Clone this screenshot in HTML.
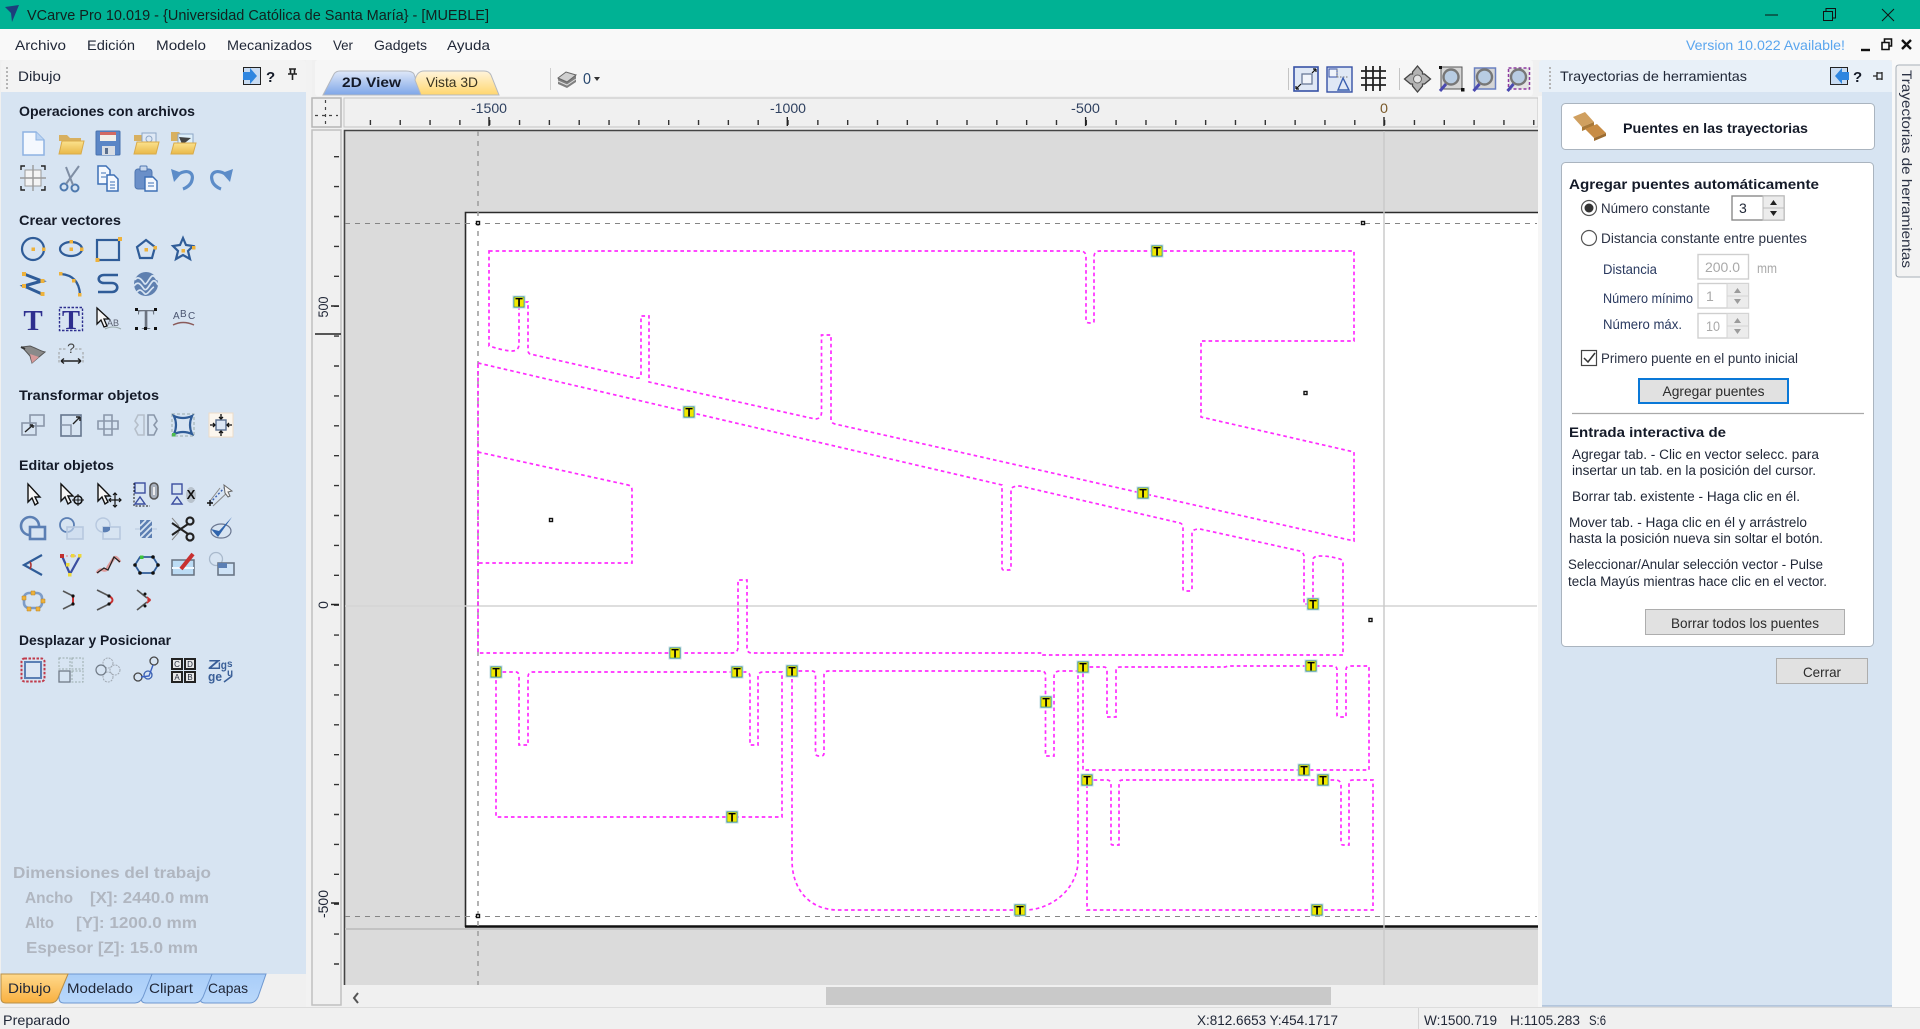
<!DOCTYPE html>
<html lang="es"><head><meta charset="utf-8"><title>VCarve Pro</title>
<style>
html,body{margin:0;padding:0;background:#f0f0f0;width:1920px;height:1029px;overflow:hidden}
svg{display:block;filter:blur(.35px)}
text{font-family:"Liberation Sans",sans-serif;font-size:14px;fill:#1f2636}
.b{font-weight:bold;fill:#141a28}
.g{font-weight:bold;font-size:16px;fill:#b0b6c0}
.d{fill:#a9a9a9}
.i{fill:none;stroke:#2f5c98;stroke-width:2.2}
.l{fill:none;stroke:#8a97aa;stroke-width:1.6}
.k{fill:none;stroke:#222;stroke-width:1.4}
.y{fill:#eeb23c}
.m{fill:none;stroke:#ff2cff;stroke-width:1.7;stroke-dasharray:3.6 3}
.gd{fill:none;stroke:#858585;stroke-width:1;stroke-dasharray:5 5}
.tm{font-weight:bold;font-size:12px;fill:#000}
</style></head><body>
<svg width="1920" height="1029" viewBox="0 0 1920 1029" xmlns="http://www.w3.org/2000/svg">
<defs>
<linearGradient id="bt" x1="0" y1="0" x2="0" y2="1"><stop offset="0" stop-color="#dfe8f8"/><stop offset="1" stop-color="#7ea6e8"/></linearGradient>
<linearGradient id="yt" x1="0" y1="0" x2="0" y2="1"><stop offset="0" stop-color="#fff4dc"/><stop offset="1" stop-color="#ffd66e"/></linearGradient>
<linearGradient id="ot" x1="0" y1="0" x2="0" y2="1"><stop offset="0" stop-color="#ffd98c"/><stop offset="1" stop-color="#f8b040"/></linearGradient>
<linearGradient id="lt" x1="0" y1="0" x2="0" y2="1"><stop offset="0" stop-color="#a9cdf8"/><stop offset="1" stop-color="#b9d8fb"/></linearGradient>
<linearGradient id="fo" x1="0" y1="0" x2="0" y2="1"><stop offset="0" stop-color="#fbe28e"/><stop offset="1" stop-color="#e9b848"/></linearGradient>
</defs>

<!-- chrome backgrounds -->
<rect width="1920" height="1029" fill="#f0f0f0"/>
<rect width="1920" height="29" fill="#00b294"/>
<rect y="29" width="1920" height="31" fill="#f9f9f9"/>
<rect x="315" y="60" width="1218" height="36" rx="3" fill="#f6f6f6"/>
<rect x="1892" y="60" width="28" height="947" fill="#f9f9f9"/>
<rect x="306" y="60" width="6" height="947" fill="#f2f2f2"/>

<!-- title bar -->
<path d="M5,7 L19,5 L12,22 L11,13 Z" fill="#1c3f7c"/>
<text x="27" y="20" style="font-size:15px;fill:#12201e" textLength="462" lengthAdjust="spacingAndGlyphs">VCarve Pro 10.019 - {Universidad Católica de Santa María} - [MUEBLE]</text>
<path d="M1765,15 H1778" stroke="#111" stroke-width="1"/>
<path d="M1823.5,11.5 H1832.5 V20.5 H1823.5 Z M1826,11 V8.5 H1835.5 V18 H1833" fill="none" stroke="#111" stroke-width="1"/>
<path d="M1882,9 L1894,21 M1894,9 L1882,21" stroke="#111" stroke-width="1"/>

<!-- menu -->
<text x="15" y="50" textLength="51" lengthAdjust="spacingAndGlyphs">Archivo</text>
<text x="87" y="50" textLength="48" lengthAdjust="spacingAndGlyphs">Edición</text>
<text x="156" y="50" textLength="50" lengthAdjust="spacingAndGlyphs">Modelo</text>
<text x="227" y="50" textLength="85" lengthAdjust="spacingAndGlyphs">Mecanizados</text>
<text x="333" y="50" textLength="20" lengthAdjust="spacingAndGlyphs">Ver</text>
<text x="374" y="50" textLength="53" lengthAdjust="spacingAndGlyphs">Gadgets</text>
<text x="447" y="50" textLength="43" lengthAdjust="spacingAndGlyphs">Ayuda</text>
<text x="1686" y="50" textLength="159" lengthAdjust="spacingAndGlyphs" style="fill:#5ba6ee">Version 10.022 Available!</text>
<path d="M1861,50 H1870" stroke="#111" stroke-width="2.4"/>
<path d="M1882,49.5 V42.5 H1889 V49.5 Z M1884.5,42 V39 H1891.5 V46 H1889.5" fill="none" stroke="#111" stroke-width="1.6"/>
<path d="M1902,40 L1911,49 M1911,40 L1902,49" stroke="#111" stroke-width="2.4"/>

<!-- left panel -->
<path d="M1,92 V64 Q1,60 5,60 H302 Q306,60 306,64 V92 Z" fill="#f3f3f3"/>
<rect x="1" y="92" width="305" height="882" fill="#d7e4f2"/>
<path d="M7,67 V90" stroke="#b5b5b5" stroke-width="2" stroke-dasharray="2 2"/>
<text x="18" y="81" textLength="43" lengthAdjust="spacingAndGlyphs">Dibujo</text>
<rect x="243.5" y="67.5" width="17" height="17" fill="#c9dcf2" stroke="#222"/>
<path d="M243,72 H250 V68 L257,76 L250,84 V80 H243 Z" fill="#2f86e0"/>
<text x="266" y="82" class="b" style="font-size:15px">?</text>
<path d="M289,69 H296 M290.5,69 V74 M294.5,69 V74 M288,74 H297 M292.5,74 V80" stroke="#222" stroke-width="1.6" fill="none"/>

<text x="19" y="116" class="b" textLength="176" lengthAdjust="spacingAndGlyphs">Operaciones con archivos</text>
<text x="19" y="225" class="b" textLength="102" lengthAdjust="spacingAndGlyphs">Crear vectores</text>
<text x="19" y="400" class="b" textLength="140" lengthAdjust="spacingAndGlyphs">Transformar objetos</text>
<text x="19" y="470" class="b" textLength="95" lengthAdjust="spacingAndGlyphs">Editar objetos</text>
<text x="19" y="645" class="b" textLength="152" lengthAdjust="spacingAndGlyphs">Desplazar y Posicionar</text>

<!-- icons: file ops -->
<g transform="translate(33,143)"><path d="M-10,-11 H3 L11,-3 V12 H-10 Z" fill="#f4f8fe" stroke="#8db2e2" stroke-width="1.5"/><path d="M3,-11 V-3 H11" fill="#bcd4f2" stroke="#8db2e2"/></g>
<g transform="translate(71,143)"><path d="M-12,-8 H-4 L-1,-5 H10 V-2 H-12 Z" fill="#d8b060"/><path d="M-12,11 L-9,-2 H13 L10,11 Z" fill="url(#fo)" stroke="#d9ab4a"/></g>
<g transform="translate(108,143)"><rect x="-12" y="-12" width="24" height="24" rx="1" fill="#5b86c6" stroke="#4a72ae"/><rect x="-8" y="-11" width="16" height="9" fill="#f1efe9"/><rect x="-8" y="-11" width="16" height="3" fill="#d26a62"/><rect x="-6" y="3" width="13" height="9" fill="#d8dde4"/><rect x="-3" y="5" width="3" height="6" fill="#5b6f8d"/></g>
<g transform="translate(146,143)"><path d="M-12,-8 H-4 L-1,-5 H10 V-2 H-12 Z" fill="#d8b060"/><rect x="-4" y="-10" width="14" height="12" fill="#dfe9f6" stroke="#8da6c6"/><circle cx="3" cy="-4" r="3" fill="none" stroke="#8da6c6"/><path d="M-12,11 L-9,-1 H13 L10,11 Z" fill="url(#fo)" stroke="#d9ab4a"/></g>
<g transform="translate(183,143)"><path d="M-12,-11 H-4 L-1,-8 H10 V-2 H-12 Z" fill="#d8b060"/><rect x="-5" y="-9" width="15" height="12" fill="#dff0fb" stroke="#8da6c6"/><path d="M-4,-6 L8,-5 L3,-1 L-1,1 Z" fill="#444"/><path d="M-12,11 L-9,0 H13 L10,11 Z" fill="url(#fo)" stroke="#d9ab4a"/></g>

<g transform="translate(33,178)"><rect x="-8" y="-8" width="16" height="16" fill="#f4f4f4" stroke="#9a9a9a"/><path d="M0,-13 V13 M-13,0 H13" stroke="#9a9a9a" stroke-width="1.4"/><path d="M-12,-8 V-12 H-8 M8,-12 H12 V-8 M12,8 V12 H8 M-8,12 H-12 V8" class="k"/></g>
<g transform="translate(71,178)"><circle cx="-7" cy="9" r="3.5" class="l" style="stroke:#4e79ae;stroke-width:2"/><circle cx="4" cy="10" r="3.5" class="l" style="stroke:#4e79ae;stroke-width:2"/><path d="M-5,6 L8,-12 M2,7 L-5,-11" stroke="#7f8ea4" stroke-width="2"/></g>
<g transform="translate(108,178)"><path d="M-10,-12 H-2 L2,-8 V6 H-10 Z" fill="#f4f8fe" stroke="#3d6fb5" stroke-width="1.5"/><path d="M-1,-3 H6 L10,1 V13 H-1 Z" fill="#f4f8fe" stroke="#3d6fb5" stroke-width="1.5"/><path d="M-7,-5 H-2 M-7,-1 H-2 M2,4 H7 M2,7 H7 M2,10 H7" stroke="#3d6fb5"/></g>
<g transform="translate(146,178)"><rect x="-11" y="-9" width="17" height="20" rx="3" fill="#6a8fc8" stroke="#4f76b0"/><rect x="-6" y="-12" width="7" height="5" rx="1" fill="#c8d8ee" stroke="#4f76b0"/><path d="M-1,-1 H7 L11,3 V13 H-1 Z" fill="#f4f8fe" stroke="#3d6fb5" stroke-width="1.4"/><path d="M2,5 H8 M2,8 H8" stroke="#3d6fb5"/></g>
<g transform="translate(183,178)"><path d="M-6,-3 C5,-10 11,-5 9,2 C8,7 3,10 0,11" fill="none" stroke="#5c8cc8" stroke-width="3.2"/><path d="M-12,-9 L-9,4 L-1,-5 Z" fill="#5c8cc8"/></g>
<g transform="translate(221,178)"><path d="M6,-3 C-5,-10 -11,-5 -9,2 C-8,7 -3,10 0,11" fill="none" stroke="#5c8cc8" stroke-width="3.2"/><path d="M12,-9 L9,4 L1,-5 Z" fill="#5c8cc8"/></g>

<!-- create vectors -->
<g transform="translate(33,249)"><circle r="11" class="i"/><rect x="-1.5" y="-1.5" width="3.5" height="3.5" class="y"/><rect x="9" y="-1.5" width="3.5" height="3.5" class="y"/></g>
<g transform="translate(71,249)"><ellipse rx="11" ry="7" class="i"/><rect x="-1.5" y="-1.5" width="3.5" height="3.5" class="y"/><rect x="-1.5" y="-9" width="3.5" height="3.5" class="y"/><rect x="9" y="-1.5" width="3.5" height="3.5" class="y"/></g>
<g transform="translate(108,249)"><rect x="-11" y="-9" width="22" height="20" class="i"/><rect x="10" y="-12" width="4" height="4" class="y"/><rect x="-12.5" y="9" width="4" height="4" class="y"/></g>
<g transform="translate(146,249)"><path d="M0,-9 L9,-2 L6,9 H-6 L-9,-2 Z" class="i"/><rect x="-1.5" y="-1" width="3.5" height="3.5" class="y"/><rect x="7.5" y="-3" width="3.5" height="3.5" class="y"/></g>
<g transform="translate(183,249)"><path d="M0,-11 L3,-4 L10,-3 L5,2 L7,10 L0,6 L-7,10 L-5,2 L-10,-3 L-3,-4 Z" class="i"/><rect x="-1.5" y="0" width="3.5" height="3.5" class="y"/><rect x="9" y="-3" width="3.5" height="3.5" class="y"/></g>

<g transform="translate(33,284)"><path d="M-9,-10 L9,-3 L-9,2 L9,10" class="i" style="stroke-width:3"/><rect x="-11" y="-12" width="4" height="4" class="y"/><rect x="7.5" y="-5" width="4" height="4" class="y"/><rect x="-11" y="0" width="4" height="4" class="y"/><rect x="7.5" y="8" width="4" height="4" class="y"/></g>
<g transform="translate(71,284)"><path d="M-10,-10 C2,-9 8,-2 9,10" class="i"/><rect x="-12" y="-12" width="3.5" height="3.5" class="y"/><rect x="1" y="-5" width="3.5" height="3.5" class="y"/><rect x="7" y="9" width="3.5" height="3.5" class="y"/></g>
<g transform="translate(108,284)"><path d="M10,-9 H-4 C-11,-9 -11,-1 -4,-1 H4 C11,-1 11,8 4,8 H-10" class="i" style="stroke-width:2.6"/></g>
<g transform="translate(146,284)"><circle r="12" fill="#5f80b0"/><path d="M-11,-4 C-8,-9 -4,-4 -2,-1 C0,3 3,-6 6,-8 C8,-9 10,-6 11,-4 M-12,2 C-8,-4 -5,1 -2,5 C1,8 4,-1 7,-3 C9,-4 11,-1 12,1 M-9,8 C-6,4 -4,7 -1,10 C2,11 5,4 8,3" fill="none" stroke="#d7e4f2" stroke-width="1.7"/></g>

<text x="33" y="330" text-anchor="middle" style="font-family:'Liberation Serif',serif;font-size:29px;font-weight:bold;fill:#2e2f8f">T</text>
<g transform="translate(71,319)"><rect x="-11.5" y="-11.5" width="23" height="23" fill="none" stroke="#2e2f8f" stroke-width="1.4" stroke-dasharray="2.5 1.5"/></g>
<text x="71" y="329" text-anchor="middle" style="font-family:'Liberation Serif',serif;font-size:27px;font-weight:bold;fill:#2e2f8f">T</text>
<g transform="translate(108,319)"><path d="M-11,-11 V5 L-7,1 L-4,8 L-1,7 L-4,0 H1 Z" fill="#f6f6f6" stroke="#111" stroke-width="1.3"/><text x="-1" y="7" style="font-size:9px;fill:#5a6070">AB</text><path d="M-3,10 Q5,6 13,10" stroke="#9aa" fill="none"/></g>
<g transform="translate(146,319)"><text x="0" y="10" text-anchor="middle" style="font-family:'Liberation Serif',serif;font-size:28px;fill:#6c7480">T</text><path d="M-11,-11 h3 v3 h-3z M8,-11 h3 v3 h-3z M-11,8 h3 v3 h-3z M8,8 h3 v3 h-3z M-2,8 h3 v3 h-3z" fill="#111"/></g>
<g transform="translate(183,319)"><text x="-10" y="0" style="font-size:10px;fill:#4a5470">A</text><text x="-3" y="-2" style="font-size:10px;fill:#4a5470">B</text><text x="5" y="0" style="font-size:10px;fill:#4a5470">C</text><path d="M-10,6 Q0,1 11,6" stroke="#8a5a5a" fill="none" stroke-width="1.4"/></g>

<g transform="translate(33,354)"><path d="M-11,-7 L-3,-8 C3,-6 7,-3 12,-2 L6,3 L-1,9 L-3,2 Z" fill="#8a8a8a" stroke="#555"/><path d="M-3,0 L6,3 L-1,9 Z" fill="#d79a9a"/><path d="M-12,-7 L-8,-5" stroke="#333" stroke-width="2"/></g>
<g transform="translate(71,354)"><path d="M-12,-2 V9 M12,-2 V9 M-12,-5 H-4 M4,-5 H12" stroke="#9a9a9a" stroke-dasharray="2.5 1.5" fill="none"/><path d="M-10,7 H10 M-10,7 L-7,4.5 M-10,7 L-7,9.5 M10,7 L7,4.5 M10,7 L7,9.5" stroke="#222" stroke-width="1.4" fill="none"/><text x="0" y="-1" text-anchor="middle" style="font-size:14px;fill:#444">?</text></g>

<!-- transform -->
<g transform="translate(33,425)"><rect x="-3" y="-10" width="14" height="11" class="l"/><rect x="-11" y="-2" width="14" height="12" class="l"/><path d="M-8,7 L0,0 M0,0 H-3 M0,0 V3" class="k"/></g>
<g transform="translate(71,425)"><rect x="-10" y="-10" width="20" height="21" class="l" style="stroke:#66768e"/><path d="M-10,0 H0 V11" class="l"/><path d="M2,-1 L9,-8 M9,-8 H5 M9,-8 V-4" class="k"/></g>
<g transform="translate(108,425)"><path d="M-4,-10 H4 V-4 H10 V4 H4 V10 H-4 V4 H-10 V-4 H-4 Z M-4,-4 H4 V4 H-4 Z" class="l"/></g>
<g transform="translate(146,425)"><path d="M-2,-10 H-8 L-11,-4 L-8,0 L-11,4 L-8,10 H-2 Z" class="l" style="stroke:#b6bfca"/><path d="M2,-10 H8 L11,-4 L8,0 L11,4 L8,10 H2 Z" class="l"/></g>
<g transform="translate(183,425)"><rect x="-11" y="-11" width="22" height="22" fill="none" stroke="#9aa" stroke-dasharray="3 2"/><path d="M-9,-9 Q0,-5 9,-9 Q5,0 9,9 Q0,5 -9,9 Q-5,0 -9,-9 Z" class="i"/><rect x="-11" y="8" width="3.5" height="3.5" fill="#4dbb4d"/></g>
<g transform="translate(221,425)"><rect x="-12" y="-12" width="24" height="24" fill="#fbf6ee" stroke="#ecdcc8"/><rect x="-5" y="-5" width="10" height="10" fill="#dbe6f4" stroke="#5a6f90" stroke-width="1.4"/><path d="M0,-11 V-6 M0,6 V11 M-11,0 H-6 M6,0 H11 M-2,-8 L0,-6 L2,-8 M-2,8 L0,6 L2,8 M-8,-2 L-6,0 L-8,2 M8,-2 L6,0 L8,2" stroke="#111" stroke-width="1.3" fill="none"/></g>

<!-- edit row 1 -->
<g transform="translate(33,495)"><path d="M-5,-11 V7 L-1,3 L2,10 L5,8 L2,2 H7 Z" fill="#f6f6f6" stroke="#111" stroke-width="1.4"/></g>
<g transform="translate(71,495)"><path d="M-10,-11 V6 L-6,2 L-3,9 L0,7 L-3,1 H2 Z" fill="#f6f6f6" stroke="#111" stroke-width="1.4"/><circle cx="7" cy="5" r="4" fill="none" stroke="#111" stroke-width="1.5"/><path d="M7,-1 V11 M1,5 H13" stroke="#111"/></g>
<g transform="translate(108,495)"><path d="M-10,-11 V6 L-6,2 L-3,9 L0,7 L-3,1 H2 Z" fill="#f6f6f6" stroke="#111" stroke-width="1.4"/><path d="M7,-2 V11 M1,5 H13 M5,0 L7,-2 L9,0 M5,10 L7,12 L9,10 M3,3 L1,5 L3,7 M11,3 L13,5 L11,7" stroke="#111" stroke-width="1.2" fill="none"/></g>
<g transform="translate(146,495)"><rect x="-11" y="-12" width="10" height="10" fill="none" stroke="#3b4ea0" stroke-width="1.4"/><path d="M-12,-12 V11 H4" fill="none" stroke="#111" stroke-dasharray="2 1.5"/><path d="M-11,9 L-6,2 L-1,9 Z" fill="none" stroke="#3b4ea0" stroke-width="1.4"/><rect x="4" y="-12" width="8" height="16" rx="4" fill="#a8b0bc" stroke="#555" stroke-width="1.5"/><path d="M8,-8 V0" stroke="#eee" stroke-width="2"/></g>
<g transform="translate(183,495)"><rect x="-11" y="-11" width="10" height="10" fill="none" stroke="#3b4ea0" stroke-width="1.4"/><path d="M-11,9 L-6,2 L-1,9 Z" fill="none" stroke="#3b4ea0" stroke-width="1.4"/><ellipse cx="8" cy="0" rx="5" ry="8" fill="#b8c2cc"/><text x="8" y="4" text-anchor="middle" class="b" style="font-size:13px;fill:#111">X</text></g>
<g transform="translate(221,495)"><path d="M-11,8 L5,-9" stroke="#3a60b0" stroke-dasharray="2 2" stroke-width="1.4"/><path d="M-11,6 L-1,-7 M-8,11 L9,-5" stroke="#888" stroke-width="1"/><path d="M-11,5 V11 M-14,8 H-8" stroke="#111" stroke-width="1.4"/><path d="M3,-10 L11,-4 L7,-3 L9,1 L7,2 L4,-2 Z" fill="#f4f4f4" stroke="#666"/></g>

<!-- edit row 2 -->
<g transform="translate(33,529)"><circle cx="-3" cy="-3" r="9" fill="none" stroke="#5b7fb4" stroke-width="2.6"/><rect x="-3" y="-2" width="15" height="12" fill="#d7e4f2" stroke="#5b7fb4" stroke-width="2.6"/></g>
<g transform="translate(71,529)"><circle cx="-4" cy="-4" r="7" fill="none" stroke="#5b7fb4" stroke-width="1.8"/><rect x="-4" y="-2" width="16" height="12" fill="#cddcee" fill-opacity=".6" stroke="#b7c8df" stroke-width="1.6"/></g>
<g transform="translate(108,529)"><circle cx="-5" cy="-4" r="7" fill="none" stroke="#b7c8df" stroke-width="1.4"/><rect x="-5" y="-2" width="17" height="12" fill="none" stroke="#b7c8df" stroke-width="1.6"/><path d="M-5,-2 H2 V1 A7,7 0 0 1 -5,3 Z" fill="#5b7fb4"/></g>
<g transform="translate(146,529)"><rect x="-6" y="-9" width="12" height="18" fill="#5d7fb2"/><path d="M-6,-3 L0,-9 M-6,3 L6,-9 M-6,9 L6,-3 M0,9 L6,3" stroke="#d7e4f2" stroke-width="1.8"/><path d="M-11,0 H-6 M6,0 H11" stroke="#b7c8df"/></g>
<g transform="translate(183,529)"><circle cx="7" cy="-8" r="3.5" fill="none" stroke="#222" stroke-width="2.2"/><circle cx="7" cy="8" r="3.5" fill="none" stroke="#222" stroke-width="2.2"/><path d="M5,-5 L-11,6 M5,5 L-11,-6" stroke="#222" stroke-width="2"/><path d="M-11,-11 L-4,-3 M-11,11 L-4,3" stroke="#888"/></g>
<g transform="translate(221,529)"><ellipse cx="0" cy="2" rx="10" ry="7" fill="none" stroke="#6a7690" stroke-width="1.2"/><path d="M-10,0 L-3,8 L11,-12 L-2,2 Z" fill="#2f64ad"/></g>

<!-- edit row 3 -->
<g transform="translate(33,565)"><path d="M9,-10 L-9,0 L9,10" class="i"/><path d="M-3,-3 Q-1,0 -3,4" stroke="#a33" stroke-width="1.6" fill="none"/></g>
<g transform="translate(71,565)"><path d="M-9,-9 L-1,9 L9,-9" class="i" style="stroke:#3b4ea0"/><path d="M-9,-9 H9" stroke="#e08080" stroke-dasharray="2 2"/><rect x="-11" y="-11" width="4" height="4" fill="#c03030"/><rect x="0" y="-11" width="3.5" height="3.5" fill="#ecd83a"/><rect x="7" y="-11" width="3.5" height="3.5" fill="#ecd83a"/><rect x="-5" y="-2" width="3.5" height="3.5" fill="#ecd83a"/><rect x="-3" y="8" width="3.5" height="3.5" fill="#ecd83a"/></g>
<g transform="translate(108,565)"><path d="M-11,8 C-6,0 -3,10 0,2 L6,-7 C8,-9 10,-6 12,-3" fill="none" stroke="#dd9a9a" stroke-width="3"/><path d="M-11,8 L-4,3 L0,5 L6,-8 L12,-3" fill="none" stroke="#222" stroke-width="1.2"/></g>
<g transform="translate(146,565)"><path d="M-11,0 L-6,-8 H7 L12,0 L7,8 H-6 Z" class="i" style="stroke-width:1.8"/><rect x="-6" y="-9.5" width="3.5" height="3.5" fill="#3bc43b"/><circle cx="7" cy="-8" r="1.8" fill="#111"/><circle cx="12" cy="0" r="1.8" fill="#111"/><circle cx="7" cy="8" r="1.8" fill="#111"/><circle cx="-6" cy="8" r="1.8" fill="#111"/><circle cx="-11" cy="0" r="1.8" fill="#111"/></g>
<g transform="translate(183,565)"><rect x="-11" y="-5" width="22" height="15" fill="#bcdcf5" stroke="#66707e" stroke-width="1.5"/><path d="M-11,3 H11" stroke="#f0f8ff" stroke-width="2"/><path d="M-2,4 L10,-11" stroke="#c83030" stroke-width="4"/></g>
<g transform="translate(221,565)"><circle cx="-5" cy="-6" r="6.5" fill="none" stroke="#a9b9cc" stroke-width="1.3"/><rect x="-3" y="-2" width="16" height="12" fill="#cfe3f7" stroke="#6a7686" stroke-width="1.6"/><rect x="-3" y="-2" width="9" height="5" fill="#5b7fb4"/></g>

<!-- edit row 4 -->
<g transform="translate(33,600)"><rect x="-9" y="-7" width="18" height="15" rx="5" fill="none" stroke="#7d9cc8" stroke-width="2.6"/><path d="M-11,-4 h4 v4 h-4z M-2,-9 h4 v4 h-4z M8,-1 h4 v4 h-4z M3,7 h4 v4 h-4z M-6,7 h4 v4 h-4z" fill="#eeb23c" stroke="#b98020" stroke-width=".5"/></g>
<g transform="translate(71,600)"><path d="M-8,-9 L2,-4 V4 L-8,9" fill="none" stroke="#555" stroke-width="1.6"/><path d="M2,-4 V4" stroke="#c83030" stroke-width="2"/><circle cx="2" cy="-4" r="1.6" fill="#111"/><circle cx="2" cy="4" r="1.6" fill="#111"/></g>
<g transform="translate(108,600)"><path d="M-11,-10 L1,-4 M-11,10 L1,4" stroke="#555" stroke-width="1.6"/><path d="M1,-4 Q8,0 1,4" fill="none" stroke="#c83030" stroke-width="2"/><circle cx="1" cy="-4" r="1.6" fill="#111"/><circle cx="1" cy="4" r="1.6" fill="#111"/></g>
<g transform="translate(146,600)"><path d="M-9,-10 L1,-2 M-9,10 L1,2" stroke="#555" stroke-width="1.6"/><path d="M1,-3 L4,0 L1,3" stroke="#c83030" stroke-width="1.6" fill="none"/><circle cx="3" cy="0" r="1.7" fill="#c83030"/><circle cx="-1" cy="-6" r="1.5" fill="#111"/><circle cx="-1" cy="6" r="1.5" fill="#111"/></g>

<!-- position row -->
<g transform="translate(33,670)"><rect x="-11.5" y="-11.5" width="23" height="23" rx="3" fill="none" stroke="#c03a4a" stroke-width="2" stroke-dasharray="2.5 1.5"/><rect x="-8" y="-8" width="16" height="16" fill="#dbe6f4" stroke="#5b7fb4" stroke-width="2"/></g>
<g transform="translate(71,670)"><rect x="-12" y="-12" width="11" height="11" fill="none" stroke="#9aa" stroke-dasharray="2 1.5"/><rect x="1" y="-12" width="11" height="11" fill="none" stroke="#9aa" stroke-dasharray="2 1.5"/><rect x="1" y="1" width="11" height="11" fill="none" stroke="#9aa" stroke-dasharray="2 1.5"/><rect x="-12" y="1" width="11" height="11" fill="none" stroke="#707a86" stroke-width="1.3"/></g>
<g transform="translate(108,670)"><circle cx="0" cy="-7" r="5" fill="none" stroke="#a0a8b2" stroke-dasharray="2 1"/><circle cx="0" cy="7" r="5" fill="none" stroke="#a0a8b2" stroke-dasharray="2 1"/><circle cx="-7" cy="0" r="5" fill="none" stroke="#707a86" stroke-width="1.2"/><circle cx="7" cy="0" r="5" fill="none" stroke="#a0a8b2" stroke-dasharray="2 1"/></g>
<g transform="translate(146,670)"><circle cx="-8" cy="7" r="4" fill="none" stroke="#444" stroke-width="1.3"/><circle cx="8" cy="-9" r="4" fill="none" stroke="#444" stroke-width="1.3"/><circle cx="2" cy="5" r="4" fill="none" stroke="#3a60b0" stroke-width="1.3"/><path d="M-5,7 L3,6 L7,-5" stroke="#3a60c0" stroke-width="1.4" fill="none"/></g>
<g transform="translate(183,670)"><rect x="-11" y="-11" width="10" height="10" fill="#e8e8e8" stroke="#222" stroke-width="2"/><rect x="2" y="-11" width="10" height="10" fill="#e8e8e8" stroke="#222" stroke-width="2"/><rect x="-11" y="2" width="10" height="10" fill="#e8e8e8" stroke="#222" stroke-width="2"/><rect x="2" y="2" width="10" height="10" fill="#e8e8e8" stroke="#222" stroke-width="2"/><text x="-6" y="-3" text-anchor="middle" style="font-size:8px">C</text><text x="7" y="-3" text-anchor="middle" style="font-size:8px">D</text><text x="-6" y="10" text-anchor="middle" style="font-size:8px">A</text><text x="7" y="10" text-anchor="middle" style="font-size:8px">B</text></g>
<g transform="translate(221,670)"><text x="-13" y="-1" class="b" style="font-size:13px;fill:#3a5f98" textLength="12" lengthAdjust="spacingAndGlyphs">Z</text><text x="-3" y="-1" class="b" style="font-size:12px;fill:#3a5f98" textLength="9" lengthAdjust="spacingAndGlyphs">ig</text><text x="6" y="-3" class="b" style="font-size:10px;fill:#3a5f98">s</text><text x="-13" y="11" class="b" style="font-size:13px;fill:#3a5f98" textLength="14" lengthAdjust="spacingAndGlyphs">ge</text><text x="6" y="6" class="b" style="font-size:10px;fill:#3a5f98">u</text><path d="M3,12 L11,6" stroke="#3a5f98" stroke-width="1.6"/></g>

<!-- dimensions -->
<text x="13" y="878" class="g" textLength="198" lengthAdjust="spacingAndGlyphs">Dimensiones del trabajo</text>
<text x="25" y="903" class="g" textLength="48" lengthAdjust="spacingAndGlyphs">Ancho</text><text x="90" y="903" class="g" textLength="119" lengthAdjust="spacingAndGlyphs">[X]: 2440.0 mm</text>
<text x="25" y="928" class="g" textLength="29" lengthAdjust="spacingAndGlyphs">Alto</text><text x="76" y="928" class="g" textLength="121" lengthAdjust="spacingAndGlyphs">[Y]: 1200.0 mm</text>
<text x="26" y="953" class="g" textLength="172" lengthAdjust="spacingAndGlyphs">Espesor [Z]: 15.0 mm</text>

<!-- bottom tabs -->
<path d="M200,998 Q200,1003 205,1003 H250 Q255,1003 258,997 L266,974 H212 L200,995 Z" fill="url(#lt)" stroke="#6f98d0"/>
<path d="M141,998 Q141,1003 146,1003 H195 Q200,1003 203,997 L212,974 H152 L141,995 Z" fill="url(#lt)" stroke="#6f98d0"/>
<path d="M59,998 Q59,1003 64,1003 H135 Q140,1003 143,997 L152,974 H68 L59,995 Z" fill="url(#lt)" stroke="#6f98d0"/>
<path d="M1,974 H68 L58,998 Q56,1003 50,1003 H6 Q1,1003 1,998 Z" fill="url(#ot)" stroke="#b89048"/>
<text x="8" y="993" textLength="43" lengthAdjust="spacingAndGlyphs">Dibujo</text>
<text x="67" y="993" textLength="66" lengthAdjust="spacingAndGlyphs">Modelado</text>
<text x="149" y="993" textLength="44" lengthAdjust="spacingAndGlyphs">Clipart</text>
<text x="208" y="993" textLength="40" lengthAdjust="spacingAndGlyphs">Capas</text>

<!-- view tabs and toolbar -->
<path d="M323,95 L334,74 Q336,71 340,71 H406 Q412,71 414,74 L421,95 Z" fill="url(#bt)" stroke="#b4b8bf"/>
<path d="M415,80 Q417,71 424,71 H484 Q489,71 491,75 L499,95 H421 Z" fill="url(#yt)" stroke="#b4b8bf"/>
<text x="342" y="87" class="b" textLength="59" lengthAdjust="spacingAndGlyphs">2D View</text>
<text x="426" y="87" textLength="52" lengthAdjust="spacingAndGlyphs" style="fill:#3a3420">Vista 3D</text>
<path d="M550.5,68 V90" stroke="#cfcfcf"/>
<g transform="translate(567,79)"><path d="M-9,-1 L-1,-7 L9,-4 V3 L0,9 L-9,5 Z" fill="#7f7f7f"/><path d="M-9,-1 L0,3 L9,-4 L-1,-7 Z" fill="#d0d0d0" stroke="#666"/><path d="M-9,2 L0,6 L9,0" stroke="#ddd" fill="none"/></g>
<text x="583" y="84" textLength="8" lengthAdjust="spacingAndGlyphs" style="fill:#25456c;font-size:16px">0</text>
<path d="M594,77 H600 L597,81 Z" fill="#333"/>

<path d="M1288.5,68 V90 M1399.5,68 V90" stroke="#c4c4c4"/>
<g transform="translate(1306,79)"><rect x="-12" y="-12" width="24" height="24" fill="#dfe8f5" stroke="#3651a5" stroke-width="1.6"/><rect x="-4" y="-5" width="10" height="10" fill="#f0f4fa" stroke="#6a7a98" stroke-width="1.3"/><path d="M6,-6 L10,-10 M10,-10 H7 M10,-10 V-7 M-5,5 L-10,10 M-10,10 H-7 M-10,10 V7" stroke="#111" stroke-width="1.2" fill="none"/></g>
<g transform="translate(1339,79)"><rect x="-12" y="-12" width="25" height="25" fill="#dfe8f5" stroke="#3651a5" stroke-width="1.4"/><rect x="-10" y="-10" width="8" height="8" fill="#f0f4fa" stroke="#3651a5"/><path d="M-2,-2 H10 M-2,-10 V-2" stroke="#777" stroke-dasharray="1.5 1.5"/><path d="M-1,11 L4,-1 L10,11 Z" fill="none" stroke="#3a60b0" stroke-width="1.4"/></g>
<path d="M1361,71 H1386 M1361,78 H1386 M1361,85 H1386 M1366,66 V91 M1373,66 V91 M1380,66 V91" stroke="#222" stroke-width="1.8"/>
<g transform="translate(1417.5,79)"><path d="M0,-13 L5,-7 V-5 H5 L7,-5 L13,0 L7,5 H5 V7 L0,13 L-5,7 V5 H-7 L-13,0 L-7,-5 H-5 V-7 Z" fill="#b3b3b3" stroke="#444" stroke-width="1.3"/><circle r="4" fill="#e4e4e4" stroke="#666"/></g>
<g transform="translate(1451,79)"><rect x="-10" y="-12" width="21" height="22" fill="#d5d5d5" stroke="#555"/><circle cx="0" cy="-2" r="7.5" fill="#b8cce2" stroke="#777" stroke-width="2.4"/><path d="M-5,5 L-11,12" stroke="#4a4ab0" stroke-width="3"/><rect x="10" y="9" width="3.5" height="3.5" fill="#111"/><rect x="-12" y="-13" width="3" height="3" fill="#111"/></g>
<g transform="translate(1484.5,79)"><rect x="-10" y="-11" width="21" height="21" fill="#d5d5d5" stroke="#6a80c0" stroke-width="1.5"/><circle cx="0" cy="-2" r="7.5" fill="#b8cce2" stroke="#777" stroke-width="2.4"/><path d="M-5,5 L-11,12" stroke="#4a4ab0" stroke-width="3"/></g>
<g transform="translate(1518.5,79)"><rect x="-10" y="-11" width="21" height="21" fill="#e4e4e4" stroke="#8e3aa0" stroke-width="1.5" stroke-dasharray="3 2"/><circle cx="0" cy="-2" r="7.5" fill="#b8cce2" stroke="#777" stroke-width="2.4"/><path d="M-5,5 L-11,12" stroke="#4a4ab0" stroke-width="3"/></g>

<!-- rulers -->
<rect x="312" y="98" width="29" height="29" fill="#f0f0f0" stroke="#b5b5b5" stroke-width="1.5"/>
<path d="M325.5,100 V125 M315,115.5 H338" stroke="#444" stroke-width="1.2" stroke-dasharray="3 4"/>
<rect x="344" y="98" width="1194" height="29" fill="#f0f0f0" stroke="#c4c4c4"/>
<rect x="312" y="130" width="29" height="875" fill="#f0f0f0" stroke="#c0c0c0" stroke-width="1.5"/>
<path d="M369.7,122.5 H1538" stroke="#333" stroke-width="5" stroke-dasharray="1.4 28.43" fill="none"/>
<path d="M489,117 V126 M787.3,117 V126 M1085.6,117 V126 M1384,117 V126" stroke="#222" stroke-width="1.4"/>
<text x="471" y="113" textLength="36" lengthAdjust="spacingAndGlyphs" style="fill:#2f4160">-1500</text>
<text x="770" y="113" textLength="36" lengthAdjust="spacingAndGlyphs" style="fill:#2f4160">-1000</text>
<text x="1071" y="113" textLength="29" lengthAdjust="spacingAndGlyphs" style="fill:#2f4160">-500</text>
<text x="1380" y="113" textLength="8" lengthAdjust="spacingAndGlyphs" style="fill:#7a5a2a">0</text>
<path d="M336.5,156 V985" stroke="#333" stroke-width="5" stroke-dasharray="1.4 28.5" fill="none"/>
<path d="M331,306 H339 M331,604.5 H339 M331,903 H339" stroke="#222" stroke-width="1.4"/>
<path d="M315,334 H341" stroke="#222" stroke-width="1.4"/>
<text transform="translate(328,307) rotate(-90)" text-anchor="middle" textLength="21" lengthAdjust="spacingAndGlyphs">500</text>
<text transform="translate(328,605) rotate(-90)" text-anchor="middle">0</text>
<text transform="translate(328,904) rotate(-90)" text-anchor="middle" textLength="28" lengthAdjust="spacingAndGlyphs">-500</text>

<!-- canvas -->
<rect x="344" y="130" width="1194" height="855" fill="#dbdbdb"/>
<path d="M344.5,985 V130.5 H1538" fill="none" stroke="#444" stroke-width="1.6"/>
<rect x="465" y="212" width="1073" height="715" fill="#fff"/>
<rect x="345" y="928" width="1193" height="2" fill="#c2c2c2"/>
<path d="M465.5,927 V212.5 H1538" fill="none" stroke="#2b2b2b" stroke-width="1.6"/>
<path d="M465,926.5 H1538" stroke="#111" stroke-width="2.6"/>
<path d="M345,606 H1537" stroke="#d4d4d4" stroke-width="1.6"/>
<path d="M1384,131 V985" stroke="#c8c8c8" stroke-width="1.4"/>
<path d="M345,223.5 H1537 M345,916.5 H1537" class="gd"/>
<path d="M478,131 V985" class="gd" style="stroke-width:1.6;stroke:#a0a0a0"/>

<path class="m" d="M489,251 H1080 Q1086,251 1086,257 V321 Q1086,323 1090,323 H1092 Q1094,323 1094,321 V257 Q1094,251 1100,251 H1354 V341 H1201 V417 L1354,452 V541 L835,424 Q831,423 831,420 V335 H821.5 V413 Q821,419 815,419 L649,382 V316 H641 V374 Q641,379 636,378 L530,354 Q528,353 528,350 V302 H519 V344 Q519,351 512,351 Q505,351 489,346 Z"/>
<path class="m" d="M478,363 L1002,485 V568 Q1002,570 1004,570 H1009 Q1011,570 1011,568 V490 Q1011,486 1020,486 L1180,523 Q1183,524 1183,528 V589 Q1183,591 1186,591 H1190 Q1192,591 1192,589 V533 Q1192,529 1200,529 L1300,551 Q1304,553 1304,556 V604 H1313 V560 Q1313,556 1320,556 Q1330,556 1340,559 Q1343,560 1343,564 V655 H1043 V653 H752 Q747,653 747,648 V580 H738 V647 Q738,653 732,653 H478 Z"/>
<path class="m" d="M478,452 L628,485 Q632,486 632,490 V563 H478"/>
<path class="m" d="M496,672 H516 Q519,672 519,677 V745 H528 V677 Q528,672 533,672 H746 Q750,672 750,677 V745 H758 V677 Q758,672 763,672 H782 V817 H496 Z"/>
<path class="m" d="M792,671 H812 Q815.5,671 815.5,675 V753 Q815.5,756 819,756 H821 Q824,756 824,753 V675 Q824,671 829,671 H1041 Q1045.5,671 1045.5,675 V756 H1054 V677 Q1054,671 1060,671 H1078 V860 C1078,890 1050,910 1025,910 H838 C810,910 792,890 792,860 Z"/>
<path class="m" d="M1083,667 H1104 Q1107,667 1107,671 V717 H1116 V671 Q1116,667 1120,667 H1225 L1228,666 H1333 Q1337,666 1337,670 V715 Q1337,717 1340,717 H1346 V670 Q1346,666 1350,666 H1369 V770 H1083 Z"/>
<path class="m" d="M1087,780 H1108 Q1111,781 1111,784 V843 Q1111,845 1113,845 H1119 V783 Q1119,780 1123,780 H1337 Q1341,781 1341,785 V843 Q1341,845 1343,845 H1349 V783 Q1349,780 1353,780 H1373 V910 H1087 Z"/>

<!-- small dots -->
<g fill="#fff" stroke="#111" stroke-width="1.4"><rect x="476.5" y="221.5" width="3" height="3"/><rect x="1361.5" y="221.5" width="3" height="3"/><rect x="1304" y="391.5" width="3" height="3"/><rect x="549.5" y="518.5" width="3" height="3"/><rect x="1369" y="618.5" width="3" height="3"/><rect x="476.5" y="914.5" width="3" height="3"/></g>

<!-- T markers -->
<g id="tabs">
<g transform="translate(519,302)"><rect x="-6" y="-6" width="12" height="12" fill="#2d8a8c" stroke="#c6dfe4"/><rect x="-4.7" y="-4.7" width="9.4" height="9.4" fill="#f2e800"/><text x="0" y="4.5" text-anchor="middle" class="tm">T</text></g>
<g transform="translate(1157,251)"><rect x="-6" y="-6" width="12" height="12" fill="#2d8a8c" stroke="#c6dfe4"/><rect x="-4.7" y="-4.7" width="9.4" height="9.4" fill="#f2e800"/><text x="0" y="4.5" text-anchor="middle" class="tm">T</text></g>
<g transform="translate(689,412)"><rect x="-6" y="-6" width="12" height="12" fill="#2d8a8c" stroke="#c6dfe4"/><rect x="-4.7" y="-4.7" width="9.4" height="9.4" fill="#f2e800"/><text x="0" y="4.5" text-anchor="middle" class="tm">T</text></g>
<g transform="translate(1143,493)"><rect x="-6" y="-6" width="12" height="12" fill="#2d8a8c" stroke="#c6dfe4"/><rect x="-4.7" y="-4.7" width="9.4" height="9.4" fill="#f2e800"/><text x="0" y="4.5" text-anchor="middle" class="tm">T</text></g>
<g transform="translate(1313,604)"><rect x="-6" y="-6" width="12" height="12" fill="#2d8a8c" stroke="#c6dfe4"/><rect x="-4.7" y="-4.7" width="9.4" height="9.4" fill="#f2e800"/><text x="0" y="4.5" text-anchor="middle" class="tm">T</text></g>
<g transform="translate(675,653)"><rect x="-6" y="-6" width="12" height="12" fill="#2d8a8c" stroke="#c6dfe4"/><rect x="-4.7" y="-4.7" width="9.4" height="9.4" fill="#f2e800"/><text x="0" y="4.5" text-anchor="middle" class="tm">T</text></g>
<g transform="translate(496,672)"><rect x="-6" y="-6" width="12" height="12" fill="#2d8a8c" stroke="#c6dfe4"/><rect x="-4.7" y="-4.7" width="9.4" height="9.4" fill="#f2e800"/><text x="0" y="4.5" text-anchor="middle" class="tm">T</text></g>
<g transform="translate(737,672)"><rect x="-6" y="-6" width="12" height="12" fill="#2d8a8c" stroke="#c6dfe4"/><rect x="-4.7" y="-4.7" width="9.4" height="9.4" fill="#f2e800"/><text x="0" y="4.5" text-anchor="middle" class="tm">T</text></g>
<g transform="translate(792,671)"><rect x="-6" y="-6" width="12" height="12" fill="#2d8a8c" stroke="#c6dfe4"/><rect x="-4.7" y="-4.7" width="9.4" height="9.4" fill="#f2e800"/><text x="0" y="4.5" text-anchor="middle" class="tm">T</text></g>
<g transform="translate(1083,667)"><rect x="-6" y="-6" width="12" height="12" fill="#2d8a8c" stroke="#c6dfe4"/><rect x="-4.7" y="-4.7" width="9.4" height="9.4" fill="#f2e800"/><text x="0" y="4.5" text-anchor="middle" class="tm">T</text></g>
<g transform="translate(1311,666)"><rect x="-6" y="-6" width="12" height="12" fill="#2d8a8c" stroke="#c6dfe4"/><rect x="-4.7" y="-4.7" width="9.4" height="9.4" fill="#f2e800"/><text x="0" y="4.5" text-anchor="middle" class="tm">T</text></g>
<g transform="translate(1046,702)"><rect x="-6" y="-6" width="12" height="12" fill="#2d8a8c" stroke="#c6dfe4"/><rect x="-4.7" y="-4.7" width="9.4" height="9.4" fill="#f2e800"/><text x="0" y="4.5" text-anchor="middle" class="tm">T</text></g>
<g transform="translate(1304,770)"><rect x="-6" y="-6" width="12" height="12" fill="#2d8a8c" stroke="#c6dfe4"/><rect x="-4.7" y="-4.7" width="9.4" height="9.4" fill="#f2e800"/><text x="0" y="4.5" text-anchor="middle" class="tm">T</text></g>
<g transform="translate(1323,780)"><rect x="-6" y="-6" width="12" height="12" fill="#2d8a8c" stroke="#c6dfe4"/><rect x="-4.7" y="-4.7" width="9.4" height="9.4" fill="#f2e800"/><text x="0" y="4.5" text-anchor="middle" class="tm">T</text></g>
<g transform="translate(1087,780)"><rect x="-6" y="-6" width="12" height="12" fill="#2d8a8c" stroke="#c6dfe4"/><rect x="-4.7" y="-4.7" width="9.4" height="9.4" fill="#f2e800"/><text x="0" y="4.5" text-anchor="middle" class="tm">T</text></g>
<g transform="translate(732,817)"><rect x="-6" y="-6" width="12" height="12" fill="#2d8a8c" stroke="#c6dfe4"/><rect x="-4.7" y="-4.7" width="9.4" height="9.4" fill="#f2e800"/><text x="0" y="4.5" text-anchor="middle" class="tm">T</text></g>
<g transform="translate(1020,910)"><rect x="-6" y="-6" width="12" height="12" fill="#2d8a8c" stroke="#c6dfe4"/><rect x="-4.7" y="-4.7" width="9.4" height="9.4" fill="#f2e800"/><text x="0" y="4.5" text-anchor="middle" class="tm">T</text></g>
<g transform="translate(1317,910)"><rect x="-6" y="-6" width="12" height="12" fill="#2d8a8c" stroke="#c6dfe4"/><rect x="-4.7" y="-4.7" width="9.4" height="9.4" fill="#f2e800"/><text x="0" y="4.5" text-anchor="middle" class="tm">T</text></g>
</g>

<!-- scrollbar -->
<rect x="345" y="986" width="1193" height="20" fill="#f0f0f0"/>
<path d="M358,993 L354,998 L358,1003" fill="none" stroke="#555" stroke-width="2"/>
<rect x="826" y="987" width="505" height="18" fill="#c9c9c9"/>
<rect x="1538" y="96" width="4" height="911" fill="#f6f6f6"/>

<!-- right panel -->
<path d="M1539,92 V64 Q1539,60 1543,60 H1888 Q1892,60 1892,64 V92 Z" fill="#e8f0f8"/>
<rect x="1542" y="92" width="350" height="914" fill="#d7e4f2"/>
<path d="M1542,1006 H1892" stroke="#8fa8c8"/>
<path d="M1550,67 V90" stroke="#b5b5b5" stroke-width="2" stroke-dasharray="2 2"/>
<text x="1560" y="81" textLength="187" lengthAdjust="spacingAndGlyphs">Trayectorias de herramientas</text>
<rect x="1830.5" y="67.5" width="17" height="17" fill="#c9dcf2" stroke="#222"/>
<path d="M1849,72 H1842 V68 L1835,76 L1842,84 V80 H1849 Z" fill="#2f86e0"/>
<text x="1853" y="82" class="b" style="font-size:15px">?</text>
<path d="M1873,76 H1877 M1877,72 V80 M1877,73 H1882 M1877,79 H1882 M1882,72 V80" stroke="#222" stroke-width="1.3" fill="none"/>

<rect x="1561.5" y="103.5" width="313" height="46" rx="4" fill="#fff" stroke="#aab4bf"/>
<g transform="translate(1589,125)"><path d="M-16,-8 L-4,-13 L5,-3 L-7,2 Z" fill="#d0a060"/><path d="M-7,2 L5,-3 V1 L-7,6 Z" fill="#a87838"/><path d="M-4,4 L8,-1 L17,8 L5,13 Z" fill="#c88c44"/><path d="M5,13 L17,8 V11 L5,16 Z" fill="#9c6c30"/></g>
<text x="1623" y="133" class="b" textLength="185" lengthAdjust="spacingAndGlyphs">Puentes en las trayectorias</text>

<rect x="1561.5" y="162.5" width="312" height="484" rx="4" fill="#fff" stroke="#aab4bf"/>
<text x="1569" y="189" class="b" textLength="250" lengthAdjust="spacingAndGlyphs">Agregar puentes automáticamente</text>

<circle cx="1589" cy="208" r="7.5" fill="#fff" stroke="#555" stroke-width="1.2"/><circle cx="1589" cy="208" r="4.5" fill="#333"/>
<text x="1601" y="213" textLength="109" lengthAdjust="spacingAndGlyphs" style="fill:#2b3244">Número constante</text>
<rect x="1732" y="196" width="52" height="24" fill="#fff" stroke="#8a8a8a" stroke-width="1.4"/>
<rect x="1763" y="196" width="21" height="24" fill="#ececec" stroke="#bbb"/>
<path d="M1763,208 H1784" stroke="#bbb"/>
<path d="M1770,205 L1773.5,200 L1777,205 Z M1770,211 L1773.5,216 L1777,211 Z" fill="#222"/>
<text x="1739" y="213">3</text>

<circle cx="1589" cy="238" r="7.5" fill="#fff" stroke="#555" stroke-width="1.2"/>
<text x="1601" y="243" textLength="206" lengthAdjust="spacingAndGlyphs" style="fill:#2b3244">Distancia constante entre puentes</text>

<text x="1603" y="274" textLength="54" lengthAdjust="spacingAndGlyphs" style="fill:#2a3a60">Distancia</text>
<rect x="1698" y="254.5" width="50.5" height="24.5" fill="#fff" stroke="#cfcfcf" stroke-width="1.4"/>
<text x="1705" y="272" textLength="35" lengthAdjust="spacingAndGlyphs" class="d">200.0</text>
<text x="1757" y="273" textLength="20" lengthAdjust="spacingAndGlyphs" class="d">mm</text>

<text x="1603" y="303" textLength="90" lengthAdjust="spacingAndGlyphs" style="fill:#2a3a60">Número mínimo</text>
<rect x="1698" y="283.5" width="50.5" height="24.5" fill="#fff" stroke="#cfcfcf" stroke-width="1.4"/>
<rect x="1727" y="283.5" width="21.5" height="24.5" fill="#ececec" stroke="#d4d4d4"/>
<path d="M1727,296 H1748" stroke="#d4d4d4"/>
<path d="M1734,293 L1737.5,288 L1741,293 Z M1734,299 L1737.5,304 L1741,299 Z" fill="#9c9c9c"/>
<text x="1706" y="301" class="d">1</text>

<text x="1603" y="329" textLength="79" lengthAdjust="spacingAndGlyphs" style="fill:#2a3a60">Número máx.</text>
<rect x="1698" y="313.5" width="50.5" height="24.5" fill="#fff" stroke="#cfcfcf" stroke-width="1.4"/>
<rect x="1727" y="313.5" width="21.5" height="24.5" fill="#ececec" stroke="#d4d4d4"/>
<path d="M1727,326 H1748" stroke="#d4d4d4"/>
<path d="M1734,323 L1737.5,318 L1741,323 Z M1734,329 L1737.5,334 L1741,329 Z" fill="#9c9c9c"/>
<text x="1706" y="331" class="d" textLength="14" lengthAdjust="spacingAndGlyphs">10</text>

<rect x="1581.5" y="350.5" width="15" height="15" fill="#fff" stroke="#444" stroke-width="1.2"/>
<path d="M1584,358 L1588,362 L1595,353" fill="none" stroke="#333" stroke-width="1.5"/>
<text x="1601" y="363" textLength="197" lengthAdjust="spacingAndGlyphs" style="fill:#2b3244">Primero puente en el punto inicial</text>

<rect x="1639" y="379" width="149" height="24" fill="#e1e1e1" stroke="#0a78d7" stroke-width="2"/>
<text x="1713.5" y="396" text-anchor="middle" textLength="102" lengthAdjust="spacingAndGlyphs" style="fill:#2b2b2b">Agregar puentes</text>

<path d="M1572,413.5 H1864" stroke="#a9a9a9" stroke-width="1.2"/>
<text x="1569" y="437" class="b" textLength="157" lengthAdjust="spacingAndGlyphs">Entrada interactiva de</text>
<text x="1572" y="459" textLength="247" lengthAdjust="spacingAndGlyphs" style="font-size:13.5px">Agregar tab. - Clic en vector selecc. para</text>
<text x="1572" y="475" textLength="244" lengthAdjust="spacingAndGlyphs" style="font-size:13.5px">insertar un tab. en la posición del cursor.</text>
<text x="1572" y="501" textLength="228" lengthAdjust="spacingAndGlyphs" style="font-size:13.5px">Borrar tab. existente - Haga clic en él.</text>
<text x="1569" y="527" textLength="238" lengthAdjust="spacingAndGlyphs" style="font-size:13.5px">Mover tab. - Haga clic en él y arrástrelo</text>
<text x="1569" y="543" textLength="254" lengthAdjust="spacingAndGlyphs" style="font-size:13.5px">hasta la posición nueva sin soltar el botón.</text>
<text x="1568" y="569" textLength="255" lengthAdjust="spacingAndGlyphs" style="font-size:13.5px">Seleccionar/Anular selección vector - Pulse</text>
<text x="1568" y="586" textLength="259" lengthAdjust="spacingAndGlyphs" style="font-size:13.5px">tecla Mayús mientras hace clic en el vector.</text>

<rect x="1645.5" y="609.5" width="199" height="25" fill="#e1e1e1" stroke="#adadad"/>
<text x="1745" y="628" text-anchor="middle" textLength="148" lengthAdjust="spacingAndGlyphs" style="fill:#2b2b2b">Borrar todos los puentes</text>
<rect x="1776.5" y="658.5" width="91" height="25" fill="#e1e1e1" stroke="#adadad"/>
<text x="1822" y="677" text-anchor="middle" textLength="38" lengthAdjust="spacingAndGlyphs" style="fill:#2b2b2b">Cerrar</text>

<!-- vertical tab -->
<path d="M1920,65 H1899 Q1896,65 1896,68 V274 Q1896,277 1899,277 H1920" fill="#f3f3f3" stroke="#a8b0b8"/>
<text transform="translate(1902,70) rotate(90)" textLength="198" lengthAdjust="spacingAndGlyphs" style="fill:#2b3244">Trayectorias de herramientas</text>

<!-- status bar -->
<path d="M0,1007.5 H1920" stroke="#dcdcdc"/>
<path d="M1418.5,1008 V1029" stroke="#d4d4d4"/>
<text x="3" y="1025" textLength="67" lengthAdjust="spacingAndGlyphs">Preparado</text>
<text x="1197" y="1025" textLength="141" lengthAdjust="spacingAndGlyphs">X:812.6653 Y:454.1717</text>
<text x="1424" y="1025" textLength="73" lengthAdjust="spacingAndGlyphs">W:1500.719</text>
<text x="1510" y="1025" textLength="70" lengthAdjust="spacingAndGlyphs">H:1105.283</text>
<text x="1589" y="1025" textLength="17" lengthAdjust="spacingAndGlyphs">S:6</text>
</svg>
</body></html>
